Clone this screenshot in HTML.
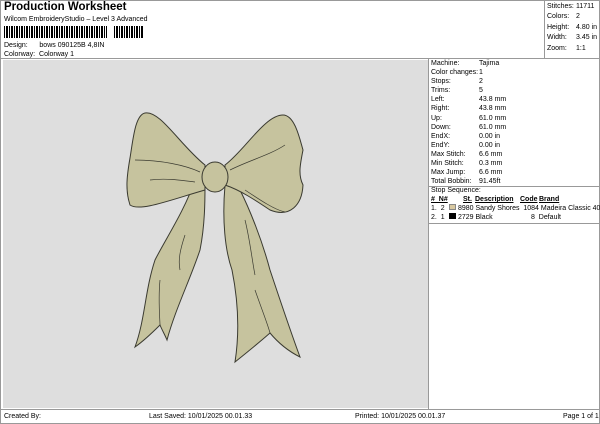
<!DOCTYPE html>
<html><head><style>
*{margin:0;padding:0;box-sizing:border-box}
body{width:600px;height:424px;background:#fff;font-family:"Liberation Sans",sans-serif;font-size:7px;color:#000;position:relative;overflow:hidden}
.a{position:absolute;white-space:nowrap}
</style></head><body>
<div class="a" style="left:0;top:0;width:600px;height:424px;border:1px solid #999"></div>
<div class="a" style="left:4px;top:1px;font-size:11.5px;font-weight:bold">Production Worksheet</div>
<div class="a" style="left:4px;top:16px">Wilcom EmbroideryStudio – Level 3 Advanced</div>
<div class="a" style="left:4px;top:26px;width:140px;height:12px;background:repeating-linear-gradient(90deg,#000 0 1px,#fff 1px 2px,#000 2px 3px,#000 3px 4px,#fff 4px 5px)"></div>
<div class="a" style="left:107px;top:26px;width:7px;height:12px;background:#fff"></div>
<div class="a" style="left:4px;top:42px">Design:&nbsp;&nbsp;&nbsp;&nbsp;&nbsp;&nbsp;bows 090125B 4,8IN</div>
<div class="a" style="left:4px;top:51px">Colorway:&nbsp;&nbsp;Colorway 1</div>
<div class="a" style="left:544px;top:0;width:1px;height:58px;background:#999"></div>
<div class="a" style="left:0;top:58px;width:600px;height:1px;background:#999"></div>
<div class="a" style="left:547px;top:2px;line-height:10.4px">Stitches:<br>Colors:<br>Height:<br>Width:<br>Zoom:</div>
<div class="a" style="left:576px;top:2px;line-height:10.4px">11711<br>2<br>4.80 in<br>3.45 in<br>1:1</div>
<div class="a" style="left:3px;top:60px;width:425px;height:348px;background:#dedede"></div>
<svg class="a" style="left:0;top:0" width="600" height="424">
<g fill="#c6c39e" stroke="#3a3a30" stroke-width="1">
<path d="M195,180 C185,210 165,240 155,260 C145,290 145,320 135,347 C145,340 155,330 160,325 C162,330 165,335 167,340 C175,310 190,280 200,250 C205,225 205,200 205,185 Z"/>
<path d="M225,185 C222,220 225,250 232,270 C238,300 240,330 235,362 C250,350 262,340 270,333 C280,345 290,352 300,357 C290,330 280,300 270,270 C262,240 250,210 240,190 Z"/>
<path d="M205,165 C180,145 160,110 145,113 C135,115 133,140 130,158 C127,175 125,190 130,205 C140,212 170,200 205,190 Z"/>
<path d="M225,165 C245,150 265,115 283,115 C295,115 300,140 303,150 C300,165 298,175 303,185 C302,205 290,218 270,210 C255,200 240,190 225,185 Z"/>
<ellipse cx="215" cy="177" rx="13" ry="15"/>
</g>
<g fill="none" stroke="#3a3a30" stroke-width="0.7">
<path d="M135,160 C160,160 185,165 200,172"/><path d="M150,180 C165,178 180,180 195,182"/>
<path d="M230,170 C250,160 270,155 285,145"/><path d="M245,190 C260,200 275,210 285,212"/>
<path d="M185,235 C180,250 178,260 180,270"/><path d="M245,220 C250,240 252,260 255,275"/>
<path d="M160,280 C158,300 160,320 160,325"/><path d="M255,290 C262,310 268,325 270,333"/>
</g>
</svg>
<div class="a" style="left:428px;top:59px;width:1px;height:350px;background:#999"></div>
<div class="a" style="left:431px;top:59px;line-height:9.1px">Machine:<br>Color changes:<br>Stops:<br>Trims:<br>Left:<br>Right:<br>Up:<br>Down:<br>EndX:<br>EndY:<br>Max Stitch:<br>Min Stitch:<br>Max Jump:<br>Total Bobbin:</div>
<div class="a" style="left:479px;top:59px;line-height:9.1px">Tajima<br>1<br>2<br>5<br>43.8 mm<br>43.8 mm<br>61.0 mm<br>61.0 mm<br>0.00 in<br>0.00 in<br>6.6 mm<br>0.3 mm<br>6.6 mm<br>91.45ft</div>
<div class="a" style="left:428px;top:186px;width:172px;height:1px;background:#999"></div>
<div class="a" style="left:431px;top:187px">Stop Sequence:</div>
<div class="a" style="left:431px;top:196px;font-weight:bold;text-decoration:underline">#&nbsp;&nbsp;N#</div>
<div class="a" style="left:463px;top:196px;font-weight:bold;text-decoration:underline">St.</div>
<div class="a" style="left:475px;top:196px;font-weight:bold;text-decoration:underline">Description</div>
<div class="a" style="left:520px;top:196px;font-weight:bold;text-decoration:underline">Code</div>
<div class="a" style="left:539px;top:196px;font-weight:bold;text-decoration:underline">Brand</div>
<div class="a" style="left:431px;top:205px">1.&nbsp;&nbsp;2</div>
<div class="a" style="left:449px;top:204px;width:7px;height:6px;background:#d8c8a0;border:1px solid #888"></div>
<div class="a" style="left:458px;top:205px">8980 Sandy Shores&nbsp;&nbsp;1084 Madeira Classic 40</div>
<div class="a" style="left:431px;top:214px">2.&nbsp;&nbsp;1</div>
<div class="a" style="left:449px;top:213px;width:7px;height:6px;background:#000"></div>
<div class="a" style="left:458px;top:214px">2729 Black</div>
<div class="a" style="left:531px;top:214px">8&nbsp;&nbsp;Default</div>
<div class="a" style="left:428px;top:223px;width:172px;height:1px;background:#999"></div>
<div class="a" style="left:0;top:409px;width:600px;height:1px;background:#999"></div>
<div class="a" style="left:4px;top:413px">Created By:</div>
<div class="a" style="left:149px;top:413px">Last Saved: 10/01/2025 00.01.33</div>
<div class="a" style="left:355px;top:413px">Printed: 10/01/2025 00.01.37</div>
<div class="a" style="left:563px;top:413px">Page 1 of 1</div>
</body></html>
